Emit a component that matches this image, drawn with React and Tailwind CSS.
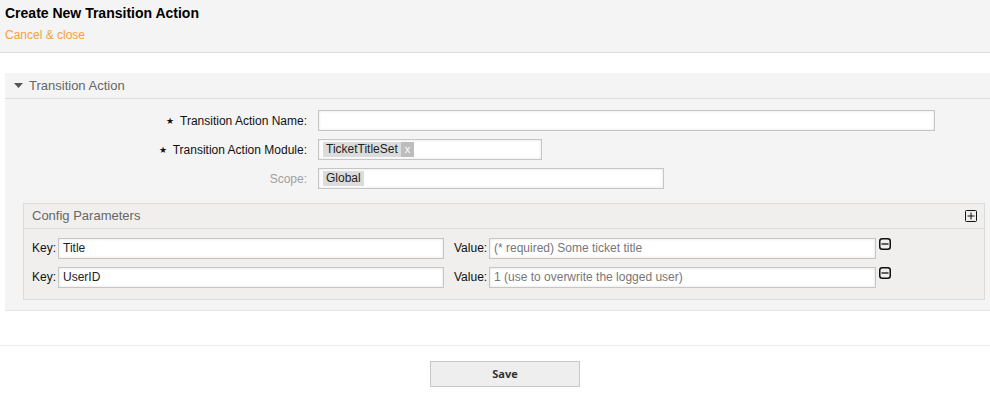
import React from 'react';

const FONT = "font-['Liberation_Sans',Arial,sans-serif]";

function PlusBox() {
  return (
    <svg width="12" height="12" viewBox="0 0 12 12" className="block">
      <rect x="0.5" y="0.5" width="11" height="11" rx="1" fill="none" stroke="#111" strokeWidth="1" />
      <path d="M6 2.5v7M2.5 6h7" stroke="#111" strokeWidth="1" />
    </svg>
  );
}

function MinusBox() {
  return (
    <svg width="12" height="12" viewBox="0 0 12 12" className="block">
      <rect x="0.75" y="0.75" width="10.5" height="10.5" rx="2.5" fill="none" stroke="#111" strokeWidth="1.5" />
      <path d="M2.5 6h7" stroke="#111" strokeWidth="1.3" />
    </svg>
  );
}

const inputCls =
  'h-[21px] border border-[#c6c6c6] bg-white shadow-[inset_0_0_3px_rgba(0,0,0,0.12)] px-[4px] text-[12px] leading-[19px] text-[#333] flex items-center';

function Chip({ children, removable }) {
  return (
    <span className="flex h-[15px] items-stretch text-[12px] leading-[15px] text-[#222]">
      <span className="bg-[#dcdcdc] px-[3px]">{children}</span>
      {removable && (
        <span className="bg-[#bdbdbd] px-[4px] text-[11px] text-white">x</span>
      )}
    </span>
  );
}

function FieldRow({ label, required, muted, children }) {
  return (
    <div className="flex items-center">
      <div
        className={`w-[302px] text-right text-[12px] ${muted ? 'text-[#a0a0a0]' : 'text-[#111]'}`}
      >
        {required && <span className="mr-[6px] text-[9px] align-[1px]">★</span>}
        {label}
      </div>
      <div className="ml-[11px]">{children}</div>
    </div>
  );
}

function ParamRow({ keyVal, value }) {
  return (
    <div className="flex items-start text-[12px] text-[#111]">
      <span className="w-[26px] leading-[21px]">Key:</span>
      <div className={`${inputCls} w-[386px]`}>{keyVal}</div>
      <span className="ml-[10px] w-[35px] leading-[21px]">Value:</span>
      <div className={`${inputCls} w-[387px] text-[#777]`}>{value}</div>
      <div className="ml-[3px]">
        <MinusBox />
      </div>
    </div>
  );
}

export default function App() {
  return (
    <div className={`${FONT} w-[990px] h-[395px] overflow-hidden bg-white text-[#333]`}>
      {/* Header */}
      <div className="h-[53px] border-b border-[#dedede] bg-[#f4f4f4] pl-[5px] pt-[5px]">
        <h1 className="text-[14px] font-bold leading-[16px] text-black">Create New Transition Action</h1>
        <a className="mt-[7px] block text-[12px] leading-[14px] text-[#f7a035]">Cancel &amp; close</a>
      </div>

      {/* Panel */}
      <div className="ml-[5px] mt-[20px] border-b border-[#e4e4e4] bg-[#f4f4f4]">
        <div className="flex h-[26px] items-center border-b border-[#dddddd] pl-[9px] text-[13px] text-[#666]">
          <svg width="9" height="6" viewBox="0 0 9 6" className="mr-[6px] mt-[1px]">
            <path d="M0 0h9L4.5 5z" fill="#555" />
          </svg>
          Transition Action
        </div>

        <div className="pb-[10px] pt-[11px]">
          <div className="flex flex-col gap-[8px]">
            <FieldRow label="Transition Action Name:" required>
              <div className={`${inputCls} w-[617px]`} />
            </FieldRow>
            <FieldRow label="Transition Action Module:" required>
              <div className={`${inputCls} w-[224px]`}>
                <Chip removable>TicketTitleSet</Chip>
              </div>
            </FieldRow>
            <FieldRow label="Scope:" muted>
              <div className={`${inputCls} w-[346px]`}>
                <Chip>Global</Chip>
              </div>
            </FieldRow>
          </div>

          {/* Config Parameters */}
          <div className="ml-[18px] mr-[5px] mt-[14px] border border-[#dcdcdc] bg-[#f0efed]">
            <div className="flex h-[25px] items-center justify-between border-b border-[#dcdcdc] pl-[8px] pr-[7px]">
              <span className="text-[13px] text-[#666]">Config Parameters</span>
              <PlusBox />
            </div>
            <div className="flex flex-col gap-[8px] pb-[11px] pl-[8px] pt-[9px]">
              <ParamRow keyVal={<span className="text-[#222]">Title</span>} value="(* required) Some ticket title" />
              <ParamRow keyVal={<span className="text-[#222]">UserID</span>} value="1 (use to overwrite the logged user)" />
            </div>
          </div>
        </div>
      </div>

      {/* Footer */}
      <div className="mt-[34px] border-t border-[#ececec] pt-[15px]">
        <div className="flex justify-center pl-[20px]">
          <button className="h-[26px] w-[150px] border border-[#c8c8c8] bg-[#eeeeee] font-['Open_Sans',sans-serif] text-[11px] font-bold text-[#333]">
            Save
          </button>
        </div>
      </div>
    </div>
  );
}
